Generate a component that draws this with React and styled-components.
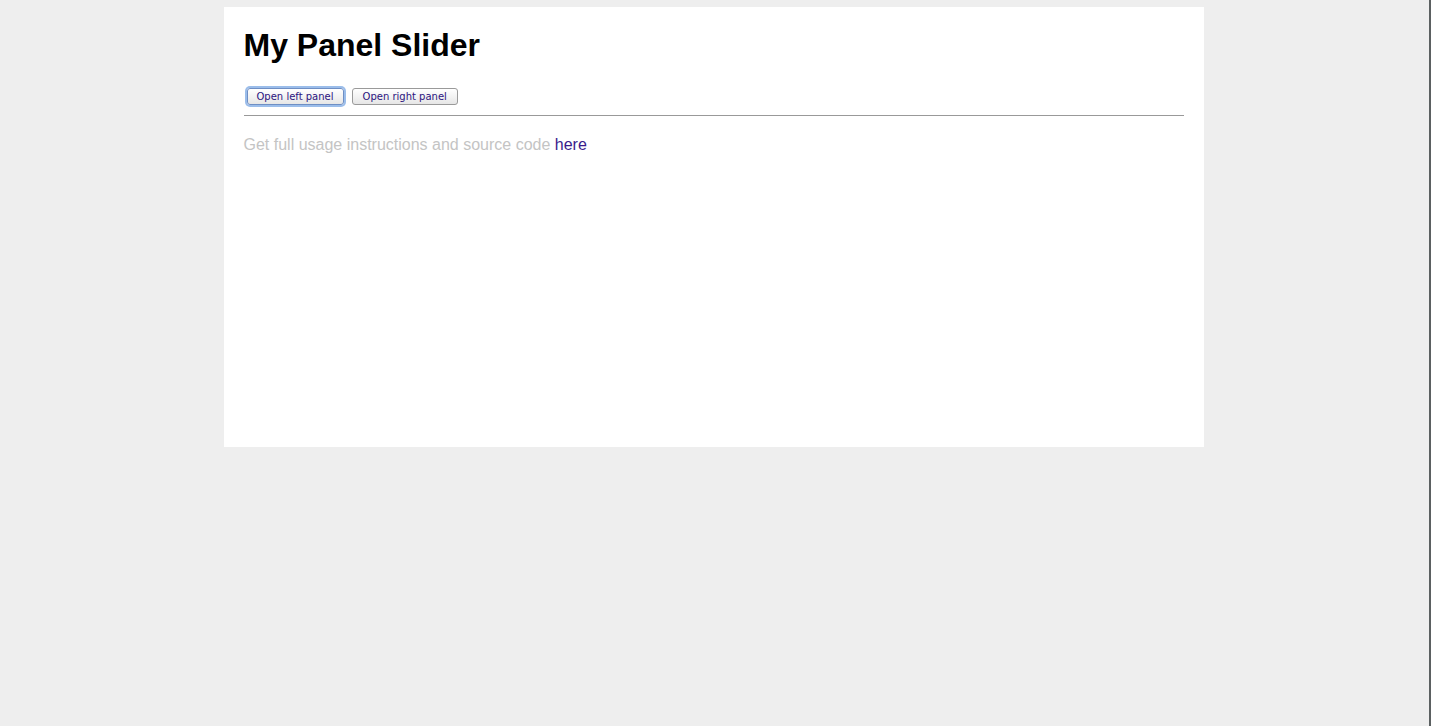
import React from 'react';
import styled, { createGlobalStyle } from 'styled-components';

const GlobalStyle = createGlobalStyle`
  html, body {
    margin: 0;
    padding: 0;
    background: #eeeeee;
  }
  body {
    min-height: 726px;
    box-shadow: inset -2px 0 0 #5b6061;
    font-family: "Liberation Sans", Arial, sans-serif;
  }
`;

const Page = styled.div`
  width: 980px;
  min-height: 440px;
  box-sizing: border-box;
  margin: 7px auto 0;
  padding: 20px;
  background: #ffffff;
  position: relative;
  left: -2px;
`;

const Title = styled.h1`
  margin: 0 0 23px;
  font-size: 32px;
  line-height: 37px;
  font-weight: bold;
  color: #000;
`;

const Toolbar = styled.div`
  display: flex;
  align-items: center;
  gap: 8px;
  height: 18px;
  padding-left: 3px;
`;

const Button = styled.button`
  height: 17px;
  padding: 0 ${p => (p.$focused ? 9 : 10)}px;
  font-family: "DejaVu Sans", Verdana, sans-serif;
  font-size: 10px;
  line-height: 15px;
  color: #2c1480;
  background: linear-gradient(#ffffff, #f3f3f3 50%, #e6e6e6);
  border: 1px solid ${p => (p.$focused ? '#6f8fc4' : '#9a9a9a')};
  border-radius: 3px;
  box-shadow: ${p => (p.$focused ? '0 0 0 2px #9bbdea' : 'none')};
  cursor: pointer;
  outline: none;
`;

const Rule = styled.hr`
  margin: 10px 0 20px;
  border: 0;
  border-top: 1px solid #999;
  height: 0;
`;

const Note = styled.p`
  margin: 0;
  font-size: 16px;
  line-height: 18px;
  color: #c4c4c4;
`;

const Link = styled.a`
  color: #3a1b8c;
  text-decoration: none;
`;

export default function App() {
  return (
    <>
      <GlobalStyle />
      <Page>
        <Title>My Panel Slider</Title>
        <Toolbar>
          <Button $focused>Open left panel</Button>
          <Button>Open right panel</Button>
        </Toolbar>
        <Rule />
        <Note>
          Get full usage instructions and source code <Link href="#">here</Link>
        </Note>
      </Page>
    </>
  );
}
